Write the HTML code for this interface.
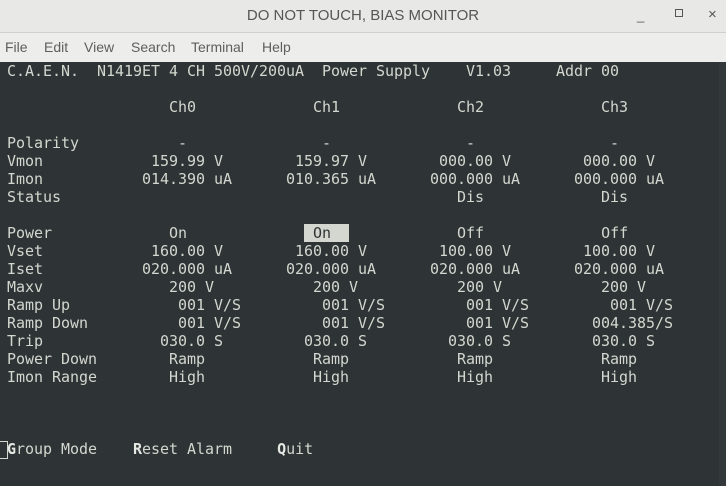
<!DOCTYPE html>
<html><head><meta charset="utf-8"><style>
html,body{margin:0;padding:0;width:726px;height:486px;overflow:hidden;background:#2e3436;}
#title{position:absolute;left:0;top:0;width:726px;height:32px;background:#e8e8e7;border-bottom:1px solid #d0d0ce;font:15px "Liberation Sans",sans-serif;color:#555753;}
#title .t{position:absolute;left:0;width:726px;top:7px;text-align:center;}
#menu{position:absolute;left:0;top:33px;width:726px;height:29px;background:#ededec;font:14px "Liberation Sans",sans-serif;color:#5e5e5e;}
#menu span{position:absolute;top:6px;}
#term{position:absolute;left:0;top:62px;width:726px;height:424px;background:#2e3436;}
pre{position:absolute;left:7px;top:62px;margin:0;font:15px "DejaVu Sans Mono","Liberation Mono",monospace;line-height:18px;color:#d3d7cf;letter-spacing:-0.03px;}
.hl{background:#d3d7cf;color:#2e3436;}
b{font-weight:bold;color:#e6e8e3;}
#cur{position:absolute;left:0;top:441px;width:7px;height:16px;border:1px solid #d3d7cf;border-left:none;}
#sb{position:absolute;left:719px;top:62px;width:7px;height:424px;background:#33393b;}
</style></head><body>
<div id="title"><div class="t">DO NOT TOUCH, BIAS MONITOR</div>
<span style="position:absolute;left:637px;top:8px;font-size:13px">_</span>
<span style="position:absolute;left:675px;top:9px;width:6px;height:6px;border:1.5px solid #555753"></span>
<span style="position:absolute;left:708px;top:6px;font-size:15px">×</span>
</div>
<div id="menu"><span style="left:5px">File</span><span style="left:44px">Edit</span><span style="left:84px">View</span><span style="left:131px">Search</span><span style="left:191px">Terminal</span><span style="left:262px">Help</span></div>
<div id="term"></div>
<div id="sb"></div>
<pre>C.A.E.N.  N1419ET 4 CH 500V/200uA  Power Supply    V1.03     Addr 00

                  Ch0             Ch1             Ch2             Ch3

Polarity           -               -               -               -
Vmon            159.99 V        159.97 V        000.00 V        000.00 V
Imon           014.390 uA      010.365 uA      000.000 uA      000.000 uA
Status                                            Dis             Dis

Power             On             <span class="hl"> On  </span>            Off             Off
Vset            160.00 V        160.00 V        100.00 V        100.00 V
Iset           020.000 uA      020.000 uA      020.000 uA      020.000 uA
Maxv              200 V           200 V           200 V           200 V
Ramp Up            001 V/S         001 V/S         001 V/S         001 V/S
Ramp Down          001 V/S         001 V/S         001 V/S       004.385/S
Trip             030.0 S         030.0 S         030.0 S         030.0 S
Power Down        Ramp            Ramp            Ramp            Ramp
Imon Range        High            High            High            High



<b>G</b>roup Mode    <b>R</b>eset Alarm     <b>Q</b>uit</pre>
<div id="cur"></div>
</body></html>
